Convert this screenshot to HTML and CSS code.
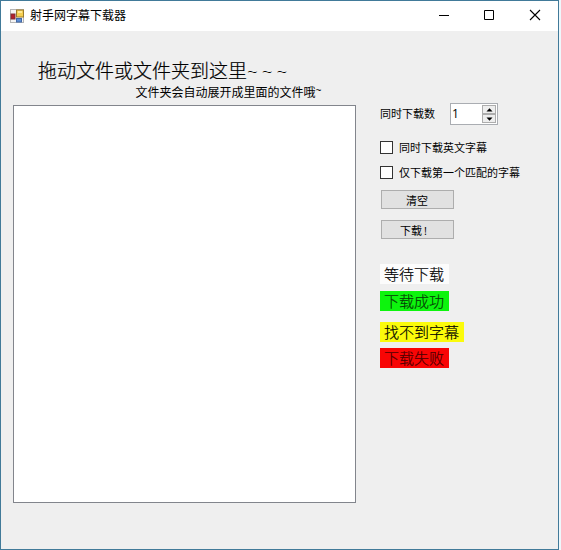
FILE: index.html
```html
<!DOCTYPE html>
<html lang="zh-CN">
<head>
<meta charset="utf-8">
<title>射手网字幕下载器</title>
<link rel="stylesheet" href="styles.css">
</head>
<body>
<div class="window">
  <header class="titlebar">
    <svg class="app-icon" width="14" height="14" viewBox="0 0 14 14">
      <rect x=".5" y=".5" width="13" height="13" fill="#f4f4f4" stroke="#b5b5b5"/>
      <rect x="1" y="5" width="4" height="5" fill="#b51f2b" stroke="#7d3038"/>
      <rect x="6.5" y="1" width="7" height="7" fill="#f5cf51" stroke="#9b7b2b"/>
      <rect x="8" y="2" width="4" height="2" fill="#ffe995"/>
      <rect x="6.5" y="9.5" width="5" height="3.5" fill="#5c8ed6" stroke="#4268a5"/>
    </svg>
    <h1 class="title">射手网字幕下载器</h1>
    <svg class="controls" width="123" height="30" viewBox="0 0 123 30" fill="none" stroke="#000">
      <path d="M4 14.5h10M49.5 9.5h9v9h-9z"/>
      <path d="M95 9l10 10M105 9l-10 10" stroke-width="1.1"/>
    </svg>
  </header>
  <main class="content">
    <section class="files">
      <h2 class="heading">拖动文件或文件夹到这里<span class="tildes">~~~</span></h2>
      <p class="hint">文件夹会自动展开成里面的文件哦<span class="tilde">~</span></p>
      <div class="drop-list"></div>
    </section>
    <aside class="options">
      <div class="count-row">
        <span class="count-label">同时下载数</span>
        <div class="spinner">
          <span class="value">1</span>
          <div class="steps">
            <span class="step"><svg width="7" height="4" viewBox="0 0 7 4"><path d="M0.5 3.5h6L3.5 .3z"/></svg></span>
            <span class="step"><svg width="7" height="4" viewBox="0 0 7 4"><path d="M0.5 .5h6L3.5 3.7z"/></svg></span>
          </div>
        </div>
      </div>
      <div class="check"><span class="box"></span><span class="check-label">同时下载英文字幕</span></div>
      <div class="check"><span class="box"></span><span class="check-label">仅下载第一个匹配的字幕</span></div>
      <div class="button clear">清空</div>
      <div class="button download">下载<span class="bang">!</span></div>
      <div class="legend">
        <span class="tag waiting">等待下载</span>
        <span class="tag success">下载成功</span>
        <span class="tag missing">找不到字幕</span>
        <span class="tag failed">下载失败</span>
      </div>
    </aside>
  </main>
</div>
</body>
</html>
```
FILE: styles.css
```css
* { box-sizing: border-box; }
body {
  margin: 0;
  background: #eef8fc;
  font-family: "Noto Sans CJK SC", sans-serif;
  font-weight: 300;
  color: #000;
  white-space: nowrap;
}
.window {
  width: 559px;
  height: 550px;
  background: #efefef;
  border: 1px solid #417a99;
}
.titlebar {
  height: 30px;
  display: flex;
  align-items: center;
  padding-left: 9px;
  background: #fff;
}
.title {
  margin: -2px 0 0 6px;
  font-size: 12px;
  font-weight: 400;
  line-height: 20px;
}
.controls { margin-left: auto; }
.content { display: flex; }
.files {
  width: 343px;
  margin-left: 12px;
}
.heading {
  margin: 24px 0 0 25px;
  font-size: 19px;
  font-weight: 300;
  line-height: 30px;
  -webkit-text-stroke: .2px;
}
.tildes {
  font-family: "Open Sans", sans-serif;
  font-weight: 300;
  letter-spacing: 3.9px;
  -webkit-text-stroke: 0;
}
.hint {
  height: 20px;
  margin: -4px 0 0 122.5px;
  font-size: 12px;
  font-weight: 400;
  line-height: 20px;
}
.tilde {
  display: inline-block;
  font-family: "Liberation Sans", sans-serif;
  font-size: 10px;
  transform: translateY(-3px);
}
.drop-list {
  height: 398px;
  margin-top: 3px;
  background: #fff;
  border: 1px solid #82858c;
}
.options {
  margin: 72px 0 0 24px;
  font-size: 11px;
  font-weight: 400;
}
.count-row {
  display: flex;
  align-items: center;
  height: 22px;
}
.count-label { width: 70px; line-height: 20px; padding-bottom: 3px; }
.spinner {
  display: flex;
  justify-content: space-between;
  width: 48px;
  height: 22px;
  padding: 1px;
  background: #fff;
  border: 1px solid #aaadb2;
}
.value {
  font-family: "Open Sans", sans-serif;
  font-size: 12px;
  line-height: 17px;
}
.steps { display: flex; flex-direction: column; width: 14px; }
.step {
  display: flex;
  flex: 1;
  align-items: center;
  justify-content: center;
  background: #eee;
  border: 1px solid #adadad;
}
.check {
  display: flex;
  align-items: center;
  gap: 6px;
  height: 25px;
  line-height: 20px;
}
.check:nth-of-type(2) { margin-top: 10px; }
.check-label { padding-bottom: 2px; }
.box {
  width: 13px;
  height: 13px;
  background: #fff;
  border: 1px solid #333;
}
.button {
  width: 73px;
  height: 19px;
  margin-left: 1px;
  background: #e1e1e1;
  border: 1px solid #adadad;
  line-height: 19px;
}
.clear { margin-top: 5px; padding-left: 24px; }
.download { margin-top: 11px; padding-left: 18px; }
.bang { font-family: "Open Sans", sans-serif; margin-left: 2px; }
.legend {
  display: flex;
  flex-direction: column;
  align-items: flex-start;
  margin-top: 25px;
  font-size: 15px;
  font-weight: 300;
  -webkit-text-stroke: .2px;
}
.tag {
  width: 69px;
  height: 20px;
  padding-left: 4px;
  line-height: 20px;
}
.waiting { background: #fcfcfc; }
.success { margin-top: 7px; background: #0df40d; color: #063c06; }
.missing { width: 84px; margin-top: 11px; background: #fbfb0b; }
.failed { margin-top: 6px; background: #f80505; color: #4c0000; }
```
